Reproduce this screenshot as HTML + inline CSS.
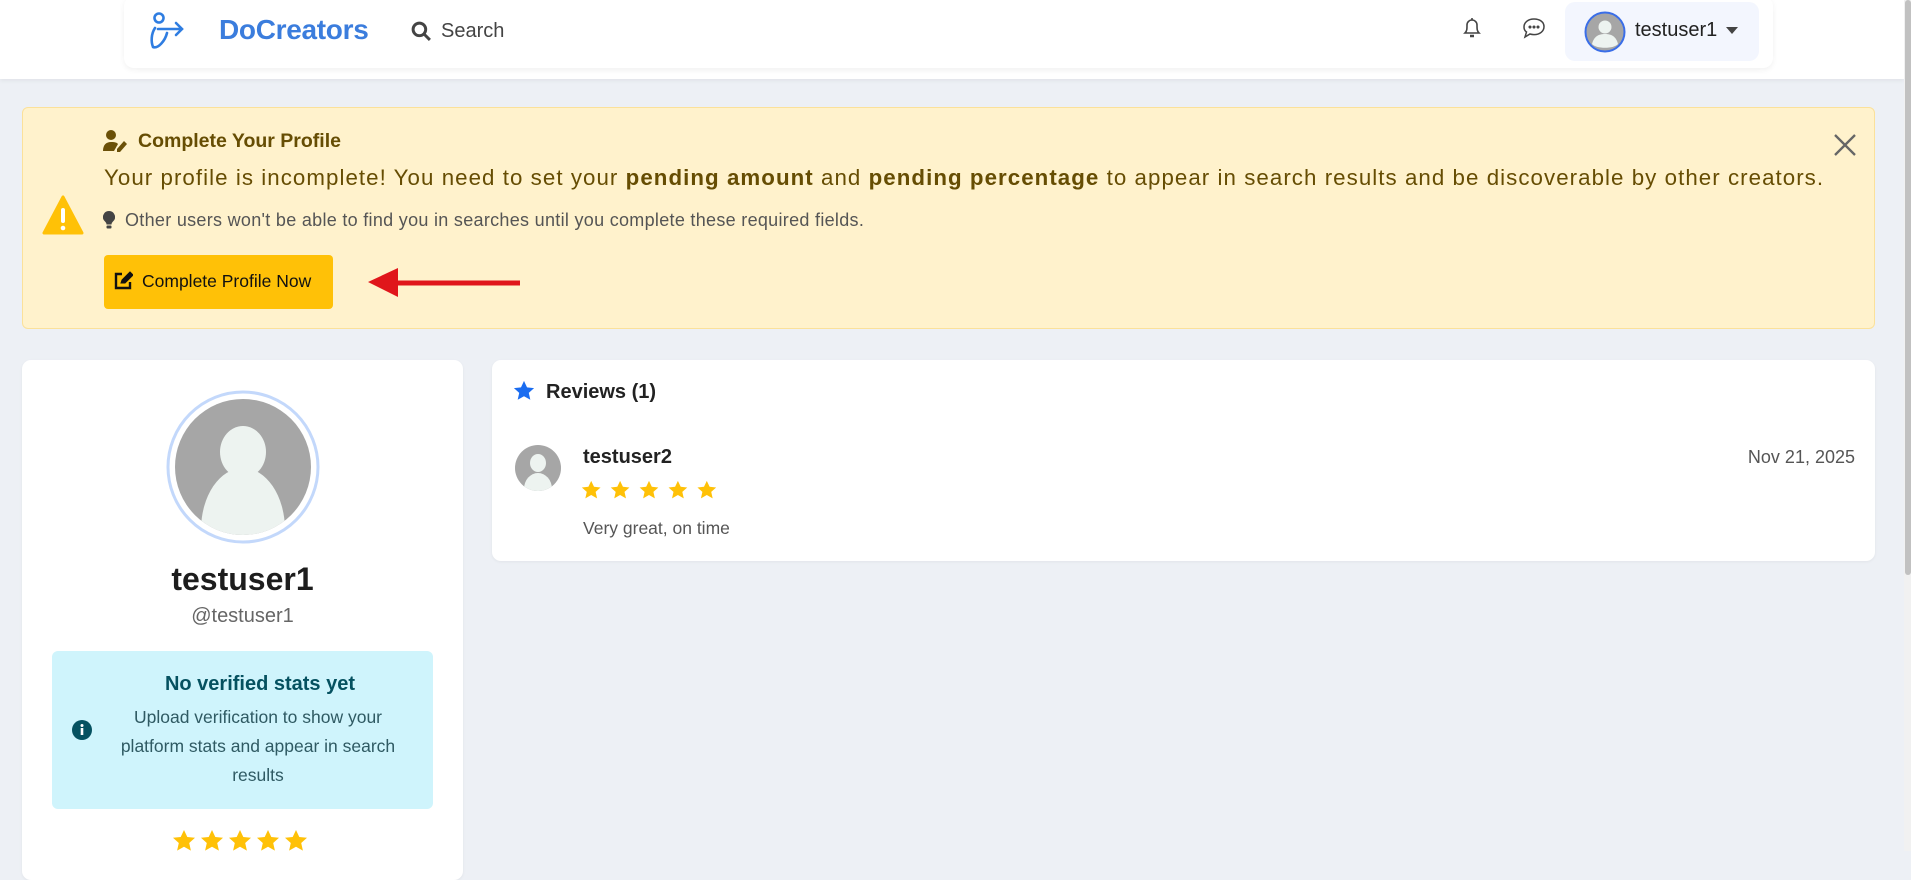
<!DOCTYPE html>
<html><head><meta charset="utf-8"><style>
*{box-sizing:border-box;margin:0;padding:0}
body{width:1911px;height:851px;overflow:hidden;background:#edf0f5;font-family:"Liberation Sans",sans-serif;position:relative;color:#212529}
.abs{position:absolute}
.top{left:0;top:0;width:1904px;height:79px;background:#fff;box-shadow:0 2px 4px rgba(0,0,0,.05)}
.nav{left:124px;top:-4px;width:1649px;height:72px;background:#fff;border-radius:10px;box-shadow:0 2px 6px rgba(0,0,0,.06)}
.sb{left:1904px;top:0;width:7px;height:851px;background:#f1f1f1}
.sbt{left:1905px;top:0;width:6px;height:575px;background:#c1c1c1;border-radius:3px}
.alert{left:22px;top:107px;width:1853px;height:222px;background:#fff2cc;border:1px solid #fbe19a;border-radius:6px}
.card{background:#fff;border-radius:9px;box-shadow:0 1px 3px rgba(0,0,0,.05)}
.star{fill:#ffc107}
</style></head><body>
<div class="abs top"></div>
<div class="abs nav"></div>
<svg class="abs" style="left:150px;top:12px" width="36" height="38" viewBox="0 0 36 38" fill="none" stroke="#2f7de1" stroke-width="2.6" stroke-linecap="round">
<circle cx="9" cy="6" r="4.5"/><path d="M5 16c-4 6-4 14-2 19 5 2 12-6 14-14"/><path d="M8 17h24M26 11l6 6-6 6"/></svg>
<div class="abs" style="left:219px;top:14px;font-size:28px;font-weight:bold;color:#3b7ddd;letter-spacing:-.3px">DoCreators</div>
<svg class="abs" style="left:411px;top:21px" width="21" height="21" viewBox="0 0 20 20" fill="none" stroke="#444" stroke-width="2.8"><circle cx="8" cy="8" r="6"/><path d="M12.5 12.5l5.5 5.5"/></svg>
<div class="abs" style="left:441px;top:20px;font-size:20px;color:#444">Search</div>
<svg class="abs" style="left:1462px;top:16px" width="20" height="24" viewBox="0 0 20 24" fill="none" stroke="#444" stroke-width="1.6"><path d="M3 17c2-2 2-4 2-8a5 5 0 0110 0c0 4 0 6 2 8z"/><path d="M8 20h4" stroke-width="2.5"/><path d="M10 2v2"/></svg>
<svg class="abs" style="left:1522px;top:17px" width="24" height="22" viewBox="0 0 24 22" fill="none" stroke="#444" stroke-width="1.5"><path d="M12 2C6 2 2 5.5 2 10c0 2.5 1 4 2.5 5L3 20l5-3c1.3.4 2.6.6 4 .6 6 0 10-3.5 10-8S18 2 12 2z"/><circle cx="8" cy="10" r=".8" fill="#444"/><circle cx="12" cy="10" r=".8" fill="#444"/><circle cx="16" cy="10" r=".8" fill="#444"/></svg>
<div class="abs" style="left:1565px;top:2px;width:194px;height:59px;background:#f3f6fe;border-radius:10px"></div>
<svg class="abs" style="left:1584px;top:11px" width="42" height="42" viewBox="0 0 42 42"><circle cx="21" cy="21" r="19.5" fill="#a6a6a6" stroke="#3a6ee8" stroke-width="2"/><circle cx="21" cy="16" r="6.5" fill="#edf3f0"/><path d="M8 33c2-8 7-10 13-10s11 2 13 10c-4 5-22 5-26 0z" fill="#edf3f0"/></svg>
<div class="abs" style="left:1635px;top:19px;font-size:20px;color:#222">testuser1</div>
<svg class="abs" style="left:1726px;top:27px" width="12" height="8"><path d="M0 0h12L6 7z" fill="#444"/></svg>
<div class="abs sb"></div><div class="abs sbt"></div>

<div class="abs alert"></div>
<svg class="abs" style="left:42px;top:195px" width="42" height="41" viewBox="0 0 42 41"><path d="M21 2L2 38h38z" fill="#ffc107" stroke="#ffc107" stroke-width="3" stroke-linejoin="round"/><rect x="19" y="13" width="4" height="15" rx="2" fill="#fff"/><circle cx="21" cy="33" r="2.3" fill="#fff"/></svg>
<svg class="abs" style="left:103px;top:130px" width="26" height="22" viewBox="0 0 26 22" fill="#6b5007"><circle cx="8" cy="5" r="5"/><path d="M0 21c0-6 3-9 8-9s6 1 7 2l-4 7z"/><path d="M14 19l7-8 3 3-7 8h-3z"/></svg>
<div class="abs" style="left:138px;top:130px;font-size:19.5px;font-weight:bold;color:#664d03">Complete Your Profile</div>
<div class="abs" style="left:104px;top:165px;font-size:22.3px;letter-spacing:1.05px;color:#664d03;white-space:nowrap">Your profile is incomplete! You need to set your <b>pending amount</b> and <b>pending percentage</b> to appear in search results and be discoverable by other creators.</div>
<svg class="abs" style="left:103px;top:211px" width="12" height="19" viewBox="0 0 12 19" fill="#444"><path d="M6 0a6 6 0 00-4 10.5c1 1 1.5 2 1.5 3h5c0-1 .5-2 1.5-3A6 6 0 006 0z"/><rect x="3.5" y="14.5" width="5" height="3" rx="1"/></svg>
<div class="abs" style="left:125px;top:210px;font-size:18px;letter-spacing:.3px;color:#555;white-space:nowrap">Other users won't be able to find you in searches until you complete these required fields.</div>
<div class="abs" style="left:104px;top:255px;width:229px;height:54px;background:#ffc107;border-radius:4px"></div>
<svg class="abs" style="left:114px;top:271px" width="19" height="19" viewBox="0 0 19 19" fill="none" stroke="#111" stroke-width="2.4"><path d="M8 3H2v14h14v-6"/><path d="M7 12l1-3 8-8 3 3-8 8z" fill="#111" stroke-width="1"/></svg>
<div class="abs" style="left:142px;top:271px;font-size:17.5px;color:#111">Complete Profile Now</div>
<svg class="abs" style="left:366px;top:267px" width="156" height="30"><path d="M154 16H30" stroke="#e0161b" stroke-width="5"/><path d="M2 15L32 1v29z" fill="#e0161b"/></svg>
<svg class="abs" style="left:1834px;top:134px" width="22" height="22" fill="none" stroke="#666" stroke-width="2.3"><path d="M1 1l20 20M21 1L1 21"/></svg>

<div class="abs card" style="left:22px;top:360px;width:441px;height:520px"></div>
<svg class="abs" style="left:166px;top:390px" width="154" height="154" viewBox="0 0 154 154"><circle cx="77" cy="77" r="75" fill="#fff" stroke="#c3d8fb" stroke-width="3"/><circle cx="77" cy="77" r="68" fill="#a6a6a6"/><clipPath id="c"><circle cx="77" cy="77" r="68"/></clipPath><g clip-path="url(#c)" fill="#edf3f0"><ellipse cx="77" cy="62" rx="23" ry="26"/><ellipse cx="77" cy="140" rx="42" ry="62"/></g></svg>
<div class="abs" style="left:22px;top:561px;width:441px;text-align:center;font-size:32px;font-weight:bold;color:#1d1d1d">testuser1</div>
<div class="abs" style="left:22px;top:605px;width:441px;text-align:center;font-size:20px;color:#666">@testuser1</div>
<div class="abs" style="left:52px;top:651px;width:381px;height:158px;background:#cff4fc;border-radius:6px"></div>
<svg class="abs" style="left:72px;top:720px" width="20" height="20"><circle cx="10" cy="10" r="10" fill="#055160"/><rect x="8.7" y="8" width="2.6" height="7" fill="#fff"/><circle cx="10" cy="5.5" r="1.5" fill="#fff"/></svg>
<div class="abs" style="left:100px;top:673px;width:320px;text-align:center;font-size:20px;font-weight:bold;color:#055160">No verified stats yet</div>
<div class="abs" style="left:108px;top:703px;width:300px;text-align:center;font-size:17.5px;line-height:29px;color:#2f5a63">Upload verification to show your platform stats and appear in search results</div>
<svg class="abs" style="left:172px;top:829px" width="136" height="24" viewBox="0 0 136 24">
<g class="star"><path id="s" d="M12 1l3.3 7 7.7.8-5.8 5.2 1.7 7.6L12 17.7 5.1 21.6l1.7-7.6L1 8.8l7.7-.8z"/><use href="#s" x="28"/><use href="#s" x="56"/><use href="#s" x="84"/><use href="#s" x="112"/></g></svg>

<div class="abs card" style="left:492px;top:360px;width:1383px;height:201px"></div>
<svg class="abs" style="left:513px;top:380px" width="22" height="22" viewBox="0 0 24 24"><path d="M12 1l3.3 7 7.7.8-5.8 5.2 1.7 7.6L12 17.7 5.1 21.6l1.7-7.6L1 8.8l7.7-.8z" fill="#1a6cf0"/></svg>
<div class="abs" style="left:546px;top:381px;font-size:20px;font-weight:bold;color:#222">Reviews (1)</div>
<svg class="abs" style="left:515px;top:445px" width="46" height="46" viewBox="0 0 46 46"><circle cx="23" cy="23" r="23" fill="#a6a6a6"/><clipPath id="c2"><circle cx="23" cy="23" r="23"/></clipPath><g clip-path="url(#c2)" fill="#edf3f0"><ellipse cx="23" cy="18" rx="8" ry="9"/><ellipse cx="23" cy="44" rx="14" ry="16"/></g></svg>
<div class="abs" style="left:583px;top:446px;font-size:20px;font-weight:bold;color:#222">testuser2</div>
<svg class="abs" style="left:581px;top:480px" width="140" height="22" viewBox="0 0 140 22"><g class="star" transform="scale(.85)"><use href="#s"/><use href="#s" x="34"/><use href="#s" x="68"/><use href="#s" x="102"/><use href="#s" x="136"/></g></svg>
<div class="abs" style="left:583px;top:518px;font-size:17.5px;color:#555">Very great, on time</div>
<div class="abs" style="left:1600px;top:447px;width:255px;text-align:right;font-size:18px;color:#555">Nov 21, 2025</div>
</body></html>
